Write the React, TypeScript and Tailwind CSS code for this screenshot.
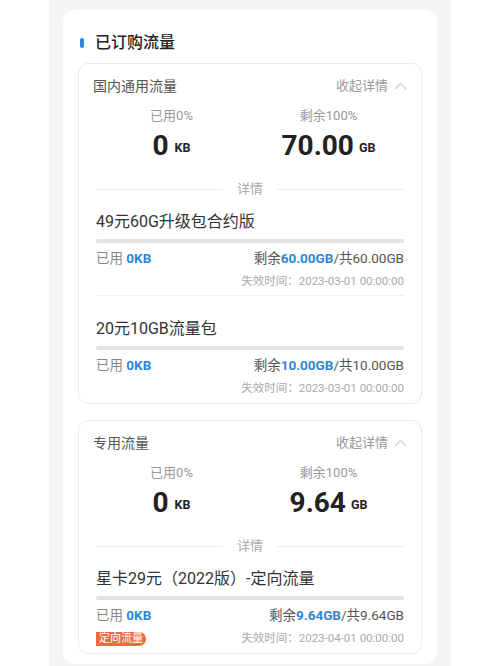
const FONT = { fontFamily: "Roboto, 'Noto Sans CJK SC', sans-serif" };

type Pkg = { name: string; left: string; total: string; expire: string; tag?: string };

function Chevron() {
  return (
    <svg width="13" height="8" viewBox="0 0 13 8" className="ml-[6px]">
      <polyline points="1,7 6.5,1.5 12,7" fill="none" stroke="#cfcfcf" strokeWidth="1.3" />
    </svg>
  );
}

function Item({ p, last }: { p: Pkg; last: boolean }) {
  return (
    <div className={last ? "pb-[6px]" : "pb-[5px] border-b border-[#f0f0f0]"}>
      <div className="text-[16px] leading-[24px] text-[#333]">{p.name}</div>
      <div className="mt-[5px] h-[4px] rounded-full bg-[#e3e3e3]" />
      <div className="mt-[5px] flex h-[20px] items-center justify-between text-[13.5px] text-[#888]">
        <span>
          已用 <span className="font-bold text-[#2d87d8]">0KB</span>
        </span>
        <span className="text-[#555]">
          剩余<span className="font-bold text-[#2d87d8]">{p.left}</span>/共{p.total}
        </span>
      </div>
      <div className="mt-[6px] flex h-[16px] items-center justify-between">
        {p.tag ? (
          <span className="rounded-l-[2px] rounded-r-full bg-[#ef6a3d] px-[3px] text-[11px] leading-[14px] text-white">
            {p.tag}
          </span>
        ) : (
          <span />
        )}
        <span className="text-[11.5px] text-[#aaa]">失效时间：2023-0{p.expire}-01 00:00:00</span>
      </div>
    </div>
  );
}

function Group({
  title,
  remain,
  pkgs,
}: {
  title: string;
  remain: string;
  pkgs: Pkg[];
}) {
  return (
    <div className="rounded-[10px] border border-[#ebebeb] pt-[11px]">
      <div className="flex h-[22px] items-center justify-between px-[14px]">
        <span className="text-[14px] text-[#555]">{title}</span>
        <span className="flex items-center text-[13px] text-[#999]">
          收起详情
          <Chevron />
        </span>
      </div>
      <div className="mt-[10px] grid grid-cols-2 px-[14px] text-center">
        <div>
          <div className="h-[18px] text-[13px] leading-[18px] text-[#999]">已用0%</div>
          <div className="mt-[5px] flex h-[32px] items-end justify-center text-[#222]">
            <span className="text-[28px] font-bold leading-[32px]">0</span>
            <span className="mb-[4px] ml-[6px] text-[12.5px] font-bold">KB</span>
          </div>
        </div>
        <div>
          <div className="h-[18px] text-[13px] leading-[18px] text-[#999]">剩余100%</div>
          <div className="mt-[5px] flex h-[32px] items-end justify-center text-[#222]">
            <span className="text-[28px] font-bold leading-[32px]">{remain}</span>
            <span className="mb-[4px] ml-[5px] text-[12.5px] font-bold">GB</span>
          </div>
        </div>
      </div>
      <div className="mt-[17px] flex h-[20px] items-center gap-[14px] px-[17px]">
        <div className="h-px flex-1 bg-[#ececec]" />
        <span className="text-[13px] text-[#aaa]">详情</span>
        <div className="h-px flex-1 bg-[#ececec]" />
      </div>
      <div className="px-[17px]">
        {pkgs.map((p, i) => (
          <div key={p.name} className={i === 0 ? "mt-[11px]" : "mt-[21px]"}>
            <Item p={p} last={i === pkgs.length - 1} />
          </div>
        ))}
      </div>
    </div>
  );
}

export default function App() {
  return (
    <div className="min-h-screen bg-white" style={FONT}>
      <div className="mx-auto min-h-[666px] w-[402px] bg-[#f5f5f5] px-[14px] pt-[10px]">
        <div className="rounded-[12px] bg-white px-[15px] pb-[10px] pt-[21px]">
          <div className="flex h-[24px] items-center pl-[2px]">
            <span className="h-[10px] w-[4px] rounded-full bg-[#2d87e0]" />
            <span className="ml-[11px] text-[16px] font-medium text-[#222]">已订购流量</span>
          </div>
          <div className="mt-[8px]">
            <Group
              title="国内通用流量"
              remain="70.00"
              pkgs={[
                { name: "49元60G升级包合约版", left: "60.00GB", total: "60.00GB", expire: "3" },
                { name: "20元10GB流量包", left: "10.00GB", total: "10.00GB", expire: "3" },
              ]}
            />
          </div>
          <div className="mt-[16px]">
            <Group
              title="专用流量"
              remain="9.64"
              pkgs={[
                {
                  name: "星卡29元（2022版）-定向流量",
                  left: "9.64GB",
                  total: "9.64GB",
                  expire: "4",
                  tag: "定向流量",
                },
              ]}
            />
          </div>
        </div>
      </div>
    </div>
  );
}
